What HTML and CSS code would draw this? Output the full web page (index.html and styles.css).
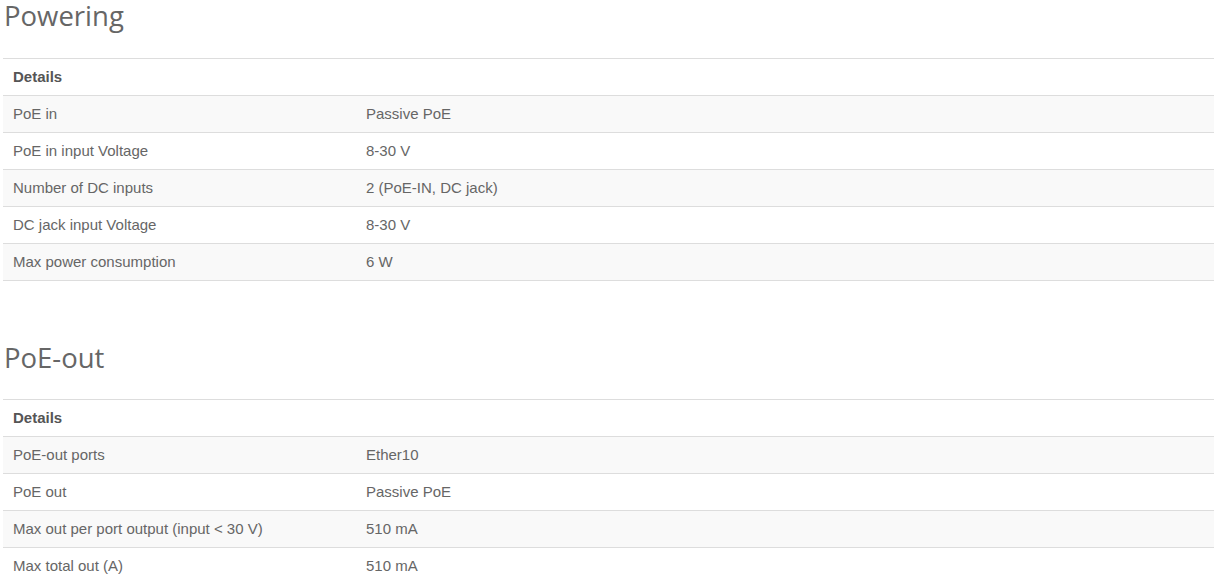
FILE: index.html
```html
<!DOCTYPE html>
<html>
<head>
<meta charset="utf-8">
<link rel="stylesheet" href="styles.css">
</head>
<body>
<section class="spec">
  <h2 class="spec-title">Powering</h2>
  <table class="spec-table">
    <thead><tr><th colspan="2">Details</th></tr></thead>
    <tbody>
      <tr><td class="k">PoE in</td><td>Passive PoE</td></tr>
      <tr><td class="k">PoE in input Voltage</td><td>8-30 V</td></tr>
      <tr><td class="k">Number of DC inputs</td><td>2 (PoE-IN, DC jack)</td></tr>
      <tr><td class="k">DC jack input Voltage</td><td>8-30 V</td></tr>
      <tr><td class="k">Max power consumption</td><td>6 W</td></tr>
    </tbody>
  </table>
</section>
<section class="spec">
  <h2 class="spec-title">PoE-out</h2>
  <table class="spec-table">
    <thead><tr><th colspan="2">Details</th></tr></thead>
    <tbody>
      <tr><td class="k">PoE-out ports</td><td>Ether10</td></tr>
      <tr><td class="k">PoE out</td><td>Passive PoE</td></tr>
      <tr><td class="k">Max out per port output (input &lt; 30 V)</td><td>510 mA</td></tr>
      <tr><td class="k">Max total out (A)</td><td>510 mA</td></tr>
    </tbody>
  </table>
</section>
</body>
</html>
```
FILE: styles.css
```css
html, body {
  margin: 0;
  padding: 0;
  background: #fff;
}
body {
  font-family: "Liberation Sans", Arial, sans-serif;
  font-size: 15px;
  color: #666;
}
.spec {
  padding-left: 3px;
}
.spec + .spec {
  margin-top: 60px;
}
.spec-title {
  margin: 0 0 0 1px;
  font-family: "Open Sans", sans-serif;
  font-weight: 400;
  font-size: 27.5px;
  line-height: 32px;
  color: #666;
  height: 58px;
  box-sizing: border-box;
}
.spec + .spec .spec-title {
  padding-top: 1px;
}
.spec-table {
  width: 100%;
  border-collapse: collapse;
  border-spacing: 0;
}
.spec-table th,
.spec-table td {
  padding: 8px 10px;
  line-height: 20px;
  text-align: left;
  vertical-align: top;
  border-top: 1px solid #ddd;
}
.spec-table th {
  font-weight: bold;
  color: #555;
}
.spec-table td.k {
  width: 333px;
}
.spec-table tbody tr:nth-child(odd) {
  background: #f9f9f9;
}
.spec-table tbody tr:last-child td {
  border-bottom: 1px solid #ddd;
}
```
